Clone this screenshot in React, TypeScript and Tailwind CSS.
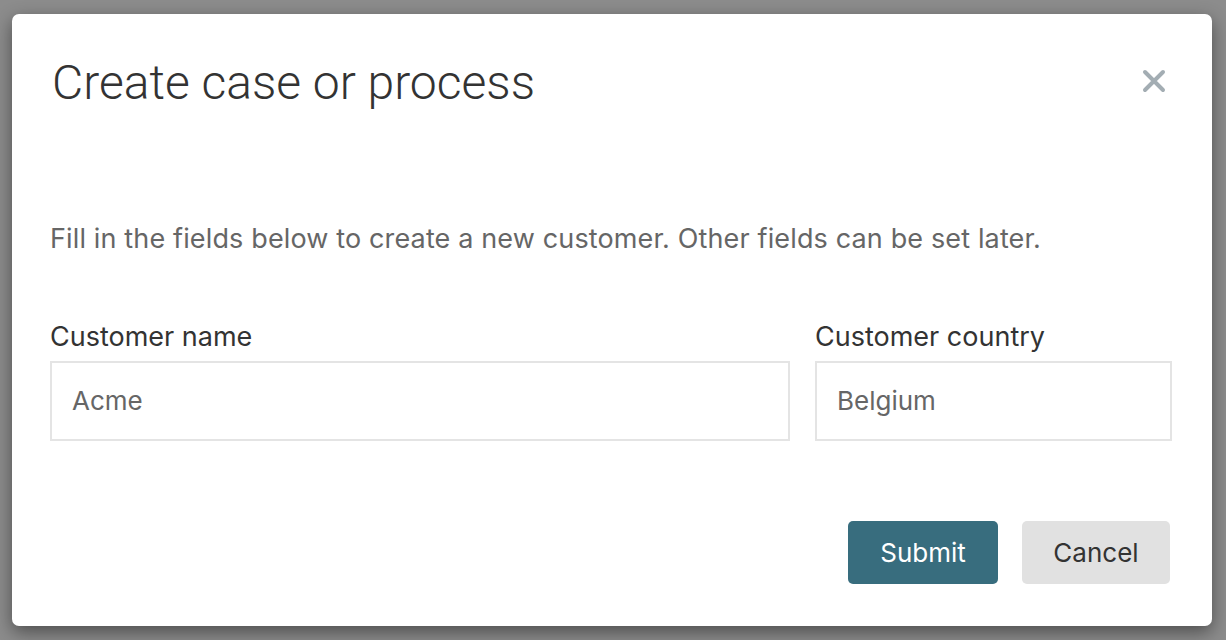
export default function App() {
  return (
    <div className="w-[1226px] h-[640px] bg-[#8c8c8c] pt-[14px] pl-[12px] overflow-hidden">
      <div className="w-[1200px] h-[612px] bg-white rounded-[7px] shadow-[0_6px_18px_rgba(0,0,0,0.45)] flex flex-col pl-[38px] pr-[40px]">
        {/* Header */}
        <div className="flex items-start justify-between pt-[45px]">
          <h2 className="ml-[2px] text-[48px] leading-[1] font-light text-[#333] font-['Roboto',sans-serif]">
            Create case or process
          </h2>
          <button className="mt-[10px] mr-[6px] text-[#a3adb3]" aria-label="Close">
            <svg width="24" height="24" viewBox="0 0 24 24" fill="none" stroke="currentColor" strokeWidth="4" strokeLinecap="round">
              <path d="M3 3L21 21M21 3L3 21" />
            </svg>
          </button>
        </div>

        {/* Body */}
        <p className="mt-[116px] text-[27px] tracking-[0.14px] leading-[1.2] text-[#666] font-['Inter',sans-serif]">
          Fill in the fields below to create a new customer. Other fields can be set later.
        </p>

        <div className="mt-[66px] flex gap-[25px] font-['Inter',sans-serif]">
          <label className="flex flex-col w-[740px] shrink-0">
            <span className="text-[27px] leading-[1.2] text-[#333]">Customer name</span>
            <input
              defaultValue="Acme"
              className="mt-[7px] h-[80px] border-2 border-[#e4e4e4] px-[20px] text-[26px] text-[#666] outline-none"
            />
          </label>
          <label className="flex flex-col w-[357px] shrink-0">
            <span className="text-[27px] leading-[1.2] text-[#333]">Customer country</span>
            <input
              defaultValue="Belgium"
              className="mt-[7px] h-[80px] border-2 border-[#e4e4e4] px-[20px] text-[26px] text-[#666] outline-none"
            />
          </label>
        </div>

        {/* Footer */}
        <div className="mt-[80px] flex justify-end gap-[24px] pr-[2px] font-['Inter',sans-serif]">
          <button className="w-[150px] h-[63px] rounded-[5px] bg-[#386d7e] text-white text-[26px]">Submit</button>
          <button className="w-[148px] h-[63px] rounded-[5px] bg-[#e1e1e1] text-[#333] text-[26px]">Cancel</button>
        </div>
      </div>
    </div>
  );
}
